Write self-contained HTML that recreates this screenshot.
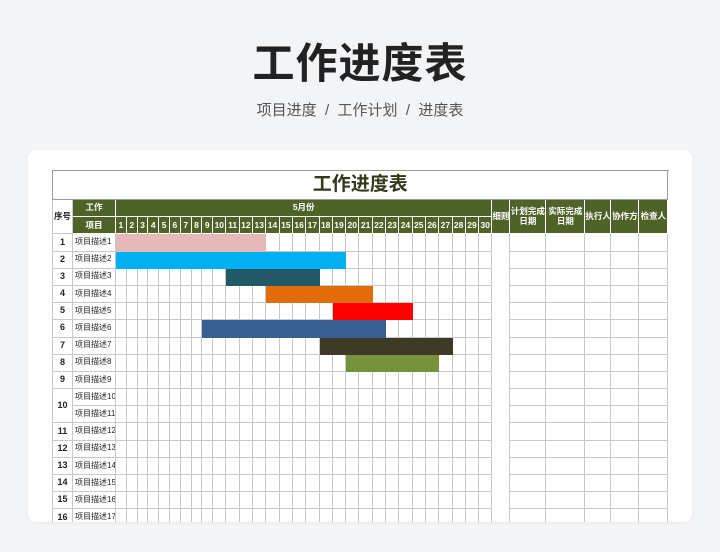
<!DOCTYPE html>
<html><head><meta charset="utf-8">
<style>
*{margin:0;padding:0;box-sizing:border-box}
body{width:720px;height:552px;background:#f3f4f6;font-family:"Liberation Sans","Noto Sans CJK SC",sans-serif;position:relative;overflow:hidden}
h1{position:absolute;top:37px;left:0;width:720px;text-align:center;font-size:42px;font-weight:bold;color:#222;letter-spacing:1px;line-height:54px}
.sub{position:absolute;top:101px;left:0;width:720px;text-align:center;font-size:15px;color:#555;line-height:20px}
.card{position:absolute;left:28px;top:150px;width:664px;height:372px;background:#fff;border-radius:8px;overflow:hidden;box-shadow:0 1px 4px rgba(0,0,0,.05)}
table{position:absolute;left:24px;top:20px;width:616px;border-collapse:collapse;table-layout:fixed;font-size:9px;color:#222}
td{border:1px solid #c8c8c8;text-align:center;height:17.2px;padding:0;white-space:nowrap;overflow:hidden;line-height:1.1}
.t td.title{height:29px;font-size:19px;font-weight:bold;color:#333a1c;border-color:#999}
.h td{background:#4f6228;color:#fff;font-weight:bold;border-color:#fff;font-size:8.5px}
.d{font-size:8px;padding-left:2px;text-align:left}
.n{font-weight:bold}
</style></head><body>
<h1>工作进度表</h1>
<div class="sub">项目进度 &nbsp;/&nbsp; 工作计划 &nbsp;/&nbsp; 进度表</div>
<div class="card"><table id="t"></table></div>
<script>
var w=[20,43];for(var i=1;i<=30;i++)w.push(i<10?10.8:13.3);w.push(18,36,39,26,28,29);
var h='<colgroup>'+w.map(x=>'<col style="width:'+x+'px">').join('')+'</colgroup>';
h+='<tr class="t"><td class="title" colspan="39">工作进度表</td></tr>';
h+='<tr class="h"><td rowspan="2" style="background:#fff;color:#222;border-color:#c8c8c8">序号</td><td>工作</td><td colspan="30">5月份</td><td rowspan="2">细则</td><td rowspan="2">计划完成<br>日期</td><td rowspan="2">实际完成<br>日期</td><td rowspan="2">执行人</td><td rowspan="2">协作方</td><td rowspan="2">检查人</td></tr>';
h+='<tr class="h"><td>项目</td>';for(i=1;i<=30;i++)h+='<td style="padding:0">'+i+'</td>';h+='</tr>';
var bars=[[1,13,'#e6b8b7'],[1,19,'#00b0f0'],[11,17,'#215967'],[14,21,'#e26b0a'],[19,24,'#ff0000'],[9,22,'#366092'],[18,27,'#3d3a26'],[20,26,'#76933c']];
for(var r=1;r<=17;r++){
 h+='<tr>';
 var num=r<=10?r:r-1;
 if(r==10)h+='<td rowspan="2" class="n">10</td>';else if(r!=11)h+='<td class="n">'+num+'</td>';
 h+='<td class="d">项目描述'+r+'</td>';
 var b=bars[r-1];
 for(i=1;i<=30;i++){var s='';if(b&&i>=b[0]&&i<=b[1])s=' style="background:'+b[2]+';border-color:'+b[2]+'"';h+='<td'+s+'></td>';}
 if(r==1)h+='<td rowspan="17"></td>';
 h+='<td></td><td></td><td></td><td></td><td></td></tr>';
}
document.getElementById('t').innerHTML=h;
</script>
</body></html>
